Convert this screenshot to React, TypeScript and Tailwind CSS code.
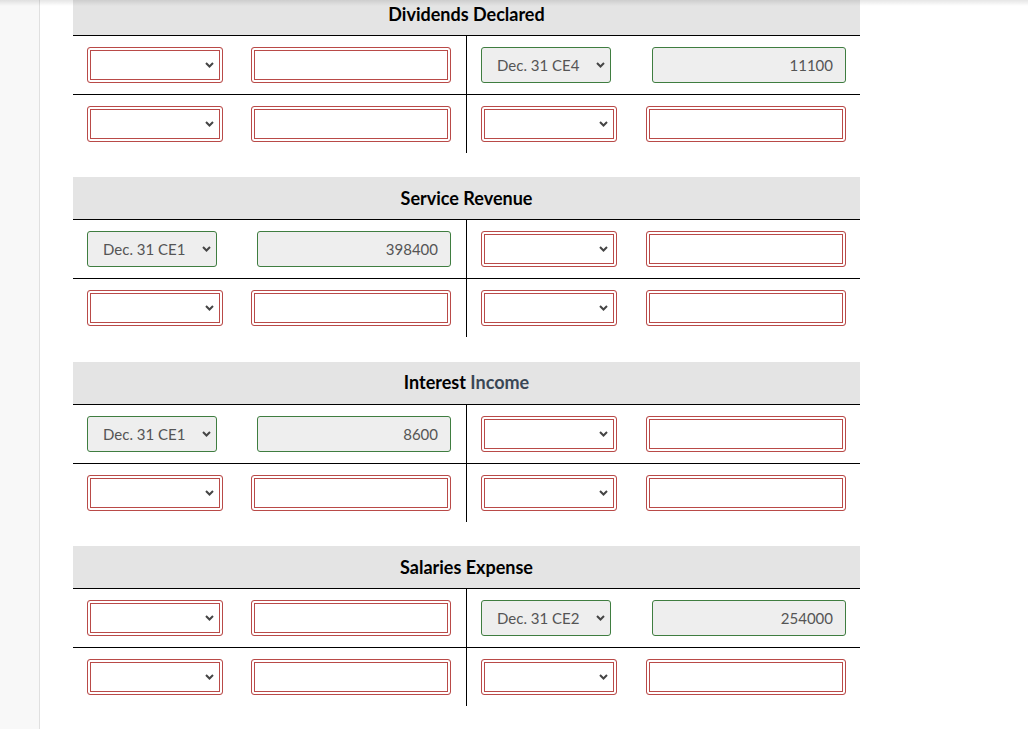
import React from 'react';

type Entry = { date: string; amount: string } | null;

interface Account {
  title: React.ReactNode;
  rows: [Entry, Entry][];
}

const accounts: Account[] = [
  {
    title: 'Dividends Declared',
    rows: [
      [null, { date: 'Dec. 31 CE4', amount: '11100' }],
      [null, null]
    ]
  },
  {
    title: 'Service Revenue',
    rows: [
      [{ date: 'Dec. 31 CE1', amount: '398400' }, null],
      [null, null]
    ]
  },
  {
    title: (
      <>
        Interest{' '}<span className="text-[#3a4756]">Income</span>
      </>
    ),
    rows: [
      [{ date: 'Dec. 31 CE1', amount: '8600' }, null],
      [null, null]
    ]
  },
  {
    title: 'Salaries Expense',
    rows: [
      [null, { date: 'Dec. 31 CE2', amount: '254000' }],
      [null, null]
    ]
  }
];

const redBox =
  'border border-[#b94a48] rounded-[3px] bg-white shadow-[inset_0_0_0_2px_#fff,inset_0_0_0_3px_#b94a48]';
const greenBox = 'border border-[#3f7d40] rounded-[3px] bg-[#eeeeee]';

function Chevron() {
  return (
    <svg width="9" height="6" viewBox="0 0 9 6" className="block">
      <path d="M1 1 L4.5 4.5 L8 1" fill="none" stroke="#454545" strokeWidth="2" />
    </svg>
  );
}

function Cell({ entry, side }: { entry: Entry; side: 'left' | 'right' }) {
  const pad = side === 'left' ? 'pl-[14px] pr-[15px]' : 'pl-[14px] pr-[14px]';
  if (!entry) {
    return (
      <div className={`flex flex-1 items-center justify-between ${pad}`}>
        <div className={`relative h-[36px] w-[136px] ${redBox}`}>
          <select className="h-full w-full appearance-none bg-transparent outline-none" />
          <span className="pointer-events-none absolute right-[8px] top-[14px]">
            <Chevron />
          </span>
        </div>
        <input className={`h-[36px] w-[200px] outline-none ${redBox}`} />
      </div>
    );
  }
  return (
    <div className={`flex flex-1 items-center justify-between ${pad}`}>
      <div className={`relative h-[36px] w-[130px] ${greenBox}`}>
        <div className="flex h-full items-center pl-[15px] text-[15px] text-[#555]">{entry.date}</div>
        <span className="pointer-events-none absolute right-[5px] top-[14px]">
          <Chevron />
        </span>
      </div>
      <div
        className={`flex h-[36px] w-[194px] items-center justify-end pr-[12px] text-[15px] text-[#555] ${greenBox}`}
      >
        {entry.amount}
      </div>
    </div>
  );
}

function TAccount({ account }: { account: Account }) {
  return (
    <div className="mb-[24.4px]">
      <div className="flex h-[43px] items-center justify-center border-b border-black bg-[#e4e4e4] text-[18px] font-bold text-black">
        <span>{account.title}</span>
      </div>
      {account.rows.map((row, i) => (
        <div key={i} className={`flex ${i === 0 ? 'h-[59px] border-b border-black' : 'h-[58px]'}`}>
          <div className="flex w-[394px] border-r border-black">
            <Cell entry={row[0]} side="left" />
          </div>
          <div className="flex w-[393px]">
            <Cell entry={row[1]} side="right" />
          </div>
        </div>
      ))}
    </div>
  );
}

export default function App() {
  return (
    <div className="relative flex h-[729px] overflow-hidden bg-white font-['Lato',sans-serif]">
      <div className="w-[40px] shrink-0 border-r border-[#e0e0e0] bg-[#f8f8f8]" />
      <div className="ml-[33px] -mt-[7px] w-[787px]">
        {accounts.map((a, i) => (
          <TAccount key={i} account={a} />
        ))}
      </div>
      <div className="pointer-events-none absolute inset-x-0 top-0 h-[6px] bg-gradient-to-b from-black/10 to-transparent" />
    </div>
  );
}
